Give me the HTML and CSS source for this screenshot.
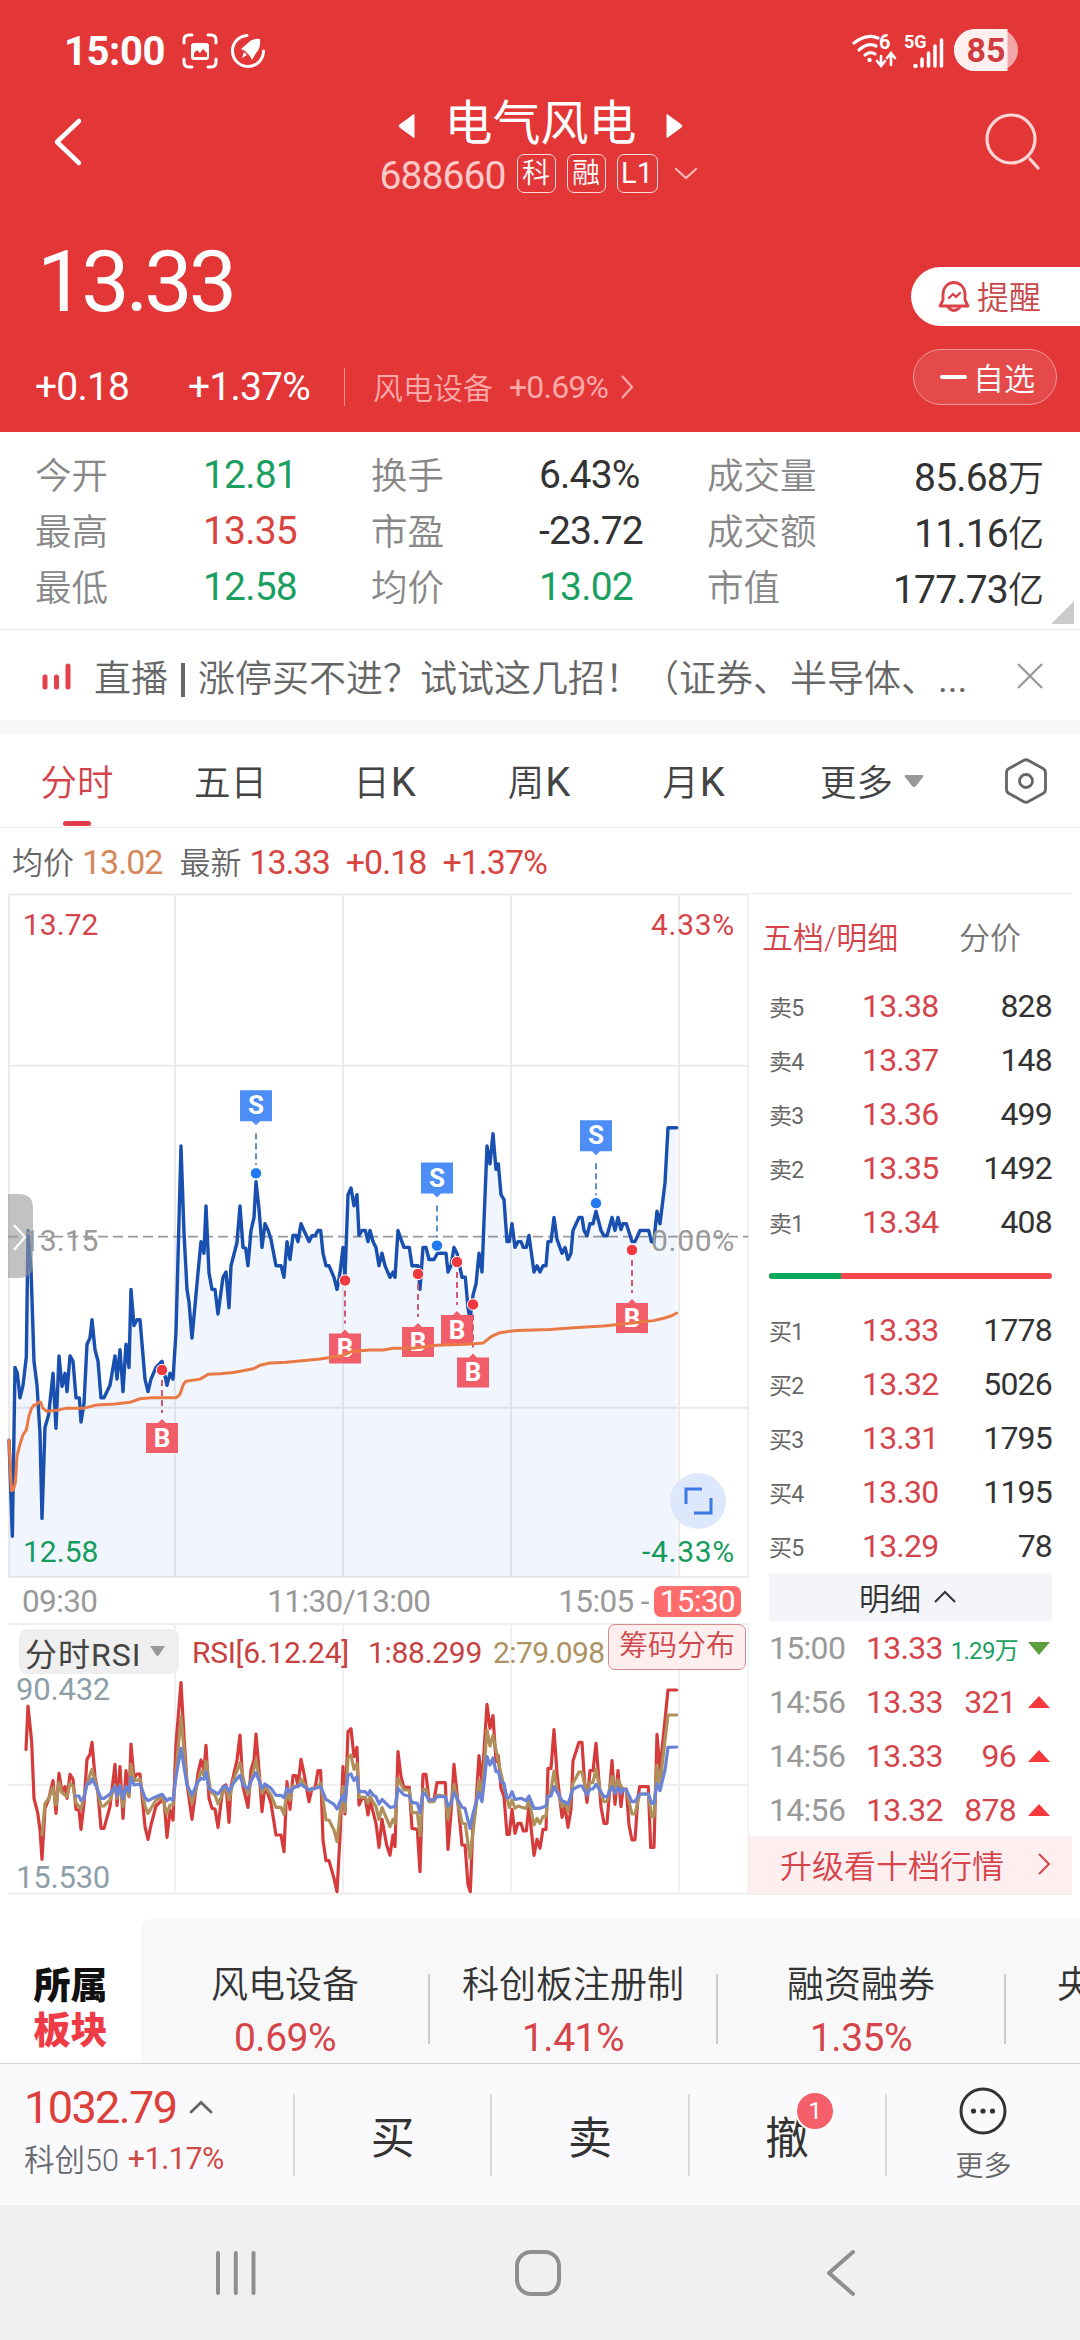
FILE: index.html
```
<!DOCTYPE html>
<html lang="zh-CN">
<head>
    <meta charset="UTF-8">
    <meta name="viewport" content="width=device-width, initial-scale=1.0">
    <title>电气风电 688660</title>
    <link rel="stylesheet" href="styles.css">
</head>
<body>
<div class="page">

    <header class="header">
        <div class="statusBar">
            <span class="clock">15:00</span>
            <svg class="shotIcon" width="36" height="36" viewBox="0 0 36 36">
                <path d="M2 10V7q0-5 5-5h3M26 2h3q5 0 5 5v3M34 26v3q0 5-5 5h-3M10 34H7q-5 0-5-5v-3" fill="none" stroke="#fff" stroke-width="3" stroke-linecap="round"/>
                <rect x="9" y="10" width="18" height="17" rx="3" fill="#fff"/>
                <path d="M12 24v-4l3-3 3 3 3-4 4 4v4z" fill="#e33637"/>
            </svg>
            <svg class="rocketIcon" width="36" height="36" viewBox="0 0 36 36">
                <path d="M17 2.500A15.500 15.500 0 1 0 33.500 18" fill="none" stroke="#fff" stroke-width="3" stroke-linecap="round"/>
                <path d="M30 6q-8-1-12 4l-7 6 4 2 5 5 2 4 4-7q5-5 4-14z" fill="#fff"/>
                <path d="M14 19l3 3-5 3z" fill="#fff"/>
            </svg>
            <span class="grow"></span>
            <svg width="170" height="44" viewBox="850 30 170 44">
                <g fill="none" stroke="#fff" stroke-width="3.200" stroke-linecap="round">
                    <path d="M853 44q13-10 24-5"/>
                    <path d="M858 51q9-8 17-4"/>
                    <path d="M864 56q5-4 10-1"/>
                    <path d="M880 57v9M876 62l4 5 4-5M890 66V55M886 59l4-5 4 5" stroke-width="2.600"/>
                    <path d="M921 60v7M927.500 54v13M934 47v20M940.500 41v26" stroke-width="3.500"/>
                </g>
                <circle cx="868.500" cy="61" r="2.200" fill="#fff"/>
                <circle cx="914.500" cy="67" r="2.300" fill="#fff"/>
                <text x="878" y="50" class="wifiSix">6</text>
                <text x="903" y="48.500" class="fiveG">5G</text>
                <rect x="953" y="30" width="64" height="42" rx="21" fill="#f3a6a7"/>
                <path d="M974 30h32.500v42H974a21 21 0 0 1 0-42z" fill="#fff0f0"/>
                <text x="985" y="62.500" class="battery">85</text>
            </svg>
        </div>

        <div class="titleBar">
            <svg class="backIcon" width="32" height="50" viewBox="0 0 32 50"><path d="M28 4L6 25l22 21" fill="none" stroke="#fff" stroke-width="4.500" stroke-linecap="round" stroke-linejoin="round"/></svg>
            <div class="titleBox">
                <div class="stockName">
                    <svg width="18" height="26" viewBox="0 0 18 26"><path d="M16 1.500v23L1.500 14q-1-1 0-2z" fill="#fff" stroke="#fff" stroke-linejoin="round"/></svg>
                    <span>电气风电</span>
                    <svg width="18" height="26" viewBox="0 0 18 26"><path d="M2 1.500v23L16.500 14q1-1 0-2z" fill="#fff" stroke="#fff" stroke-linejoin="round"/></svg>
                </div>
                <div class="stockCode">
                    <span class="codeNum">688660</span>
                    <span class="tag">科</span>
                    <span class="tag">融</span>
                    <span class="tag tagL1">L1</span>
                    <svg class="codeArrow" width="24" height="14" viewBox="0 0 24 14"><path d="M2 2l10 9 10-9" fill="none" stroke="#ffb9b9" stroke-width="2.200" stroke-linecap="round"/></svg>
                </div>
            </div>
            <svg class="searchIcon" width="58" height="60" viewBox="0 0 58 60"><g fill="none" stroke="#ffd6d6" stroke-width="3.200" stroke-linecap="round"><circle cx="27" cy="27" r="24"/><path d="M46 47l8 9"/></g></svg>
        </div>

        <div class="priceArea">
            <div class="priceLeft">
                <div class="bigPrice">13.33</div>
                <div class="priceSub">
                    <span class="num">+0.18</span>
                    <span class="num">+1.37%</span>
                    <div class="industry">
                        <span>风电设备</span>
                        <span class="industryNum">+0.69%</span>
                        <svg width="14" height="26" viewBox="0 0 14 26"><path d="M2 2l10 11L2 24" fill="none" stroke="#ffa9a9" stroke-width="2.200"/></svg>
                    </div>
                </div>
            </div>
            <div class="priceRight">
                <div class="remindBtn">
                    <svg width="32" height="34" viewBox="0 0 32 34"><g fill="none" stroke="#d94348" stroke-width="2.800" stroke-linejoin="round" stroke-linecap="round"><path d="M5 20v-6a11 11.500 0 0 1 22 0v6l3 6H2z"/><path d="M10 27q6 7 12 0" /><path d="M11 18l4-4 3 3 4-4" stroke-width="2.400"/></g></svg>
                    <span>提醒</span>
                </div>
                <div class="favBtn"><i class="minus"></i><span>自选</span></div>
            </div>
        </div>
    </header>

    <section class="stats">
        <span class="label">今开</span><span class="num green">12.81</span>
        <span class="label">换手</span><span class="num">6.43%</span>
        <span class="label">成交量</span><span class="num right">85.68<small>万</small></span>
        <span class="label">最高</span><span class="num red">13.35</span>
        <span class="label">市盈</span><span class="num">-23.72</span>
        <span class="label">成交额</span><span class="num right">11.16<small>亿</small></span>
        <span class="label">最低</span><span class="num green">12.58</span>
        <span class="label">均价</span><span class="num green">13.02</span>
        <span class="label">市值</span><span class="num right">177.73<small>亿</small></span>
        <i class="corner"></i>
    </section>

    <section class="notice">
        <svg width="30" height="28" viewBox="0 0 30 28"><path d="M3 15v10M14.500 15v10M26 4v21" stroke="#e5414c" stroke-width="5" stroke-linecap="round"/></svg>
        <span class="noticeText">直播<i class="bar"></i>涨停买不进？试试这几招！（证券、半导体、<b>...</b></span>
        <svg width="26" height="26" viewBox="0 0 26 26"><path d="M1 1l24 24M25 1L1 25" stroke="#999" stroke-width="2.400"/></svg>
    </section>

    <nav class="tabs">
        <span class="active">分时</span>
        <span>五日</span>
        <span>日<b>K</b></span>
        <span>周<b>K</b></span>
        <span>月<b>K</b></span>
        <span class="moreTab">更多<svg width="20" height="14" viewBox="0 0 20 14"><path d="M1 1h18q1 1 0 2l-7 9q-2 2-4 0L1 3q-1-1 0-2z" fill="#999"/></svg></span>
        <svg class="setIcon" width="44" height="46" viewBox="0 0 44 46"><g fill="none" stroke="#666" stroke-width="2.800"><path d="M19.500 2.500q2.500-1.500 5 0L39 10.500q2.500 1.500 2.500 4v17q0 2.500-2.500 4L24.500 43.500q-2.500 1.500-5 0L5 35.500q-2.500-1.500-2.500-4v-17q0-2.500 2.500-4z"/><circle cx="22" cy="23" r="6.500"/></g></svg>
    </nav>

    <div class="infoLine">
        <span class="infoLabel">均价</span><span class="num orange">13.02</span>
        <span class="infoLabel second">最新</span><span class="num red">13.33</span><span class="num red gap">+0.18</span><span class="num red gap">+1.37%</span>
    </div>

    <main class="main">
        <div class="charts">
            <!-- 分时图 -->
            <svg class="minuteChart" width="749" height="686" viewBox="0 893 749 686">
                <defs>
                    <g id="sell">
                        <path d="M-16-83h32v31H4l-4 4-4-4h-12z" fill="#4d8df6"/>
                        <text y="-59" class="mark">S</text>
                        <path d="M0-40V-8" stroke="#5b8fc9" stroke-width="2" stroke-dasharray="6 4"/>
                        <circle r="5.700" fill="#2478f0" stroke="#fff" stroke-width="1"/>
                    </g>
                    <g id="buy">
                        <path d="M-16 53h12l4-4 4 4h12v30h-32z" fill="#f15e69"/>
                        <text y="76.500" class="mark">B</text>
                        <path d="M0 10v33" stroke="#d25a6c" stroke-width="2" stroke-dasharray="6 4"/>
                        <circle r="5.700" fill="#f0383f" stroke="#fff" stroke-width="1"/>
                    </g>
                </defs>
                <g fill="none" stroke="#ebebed" stroke-width="2">
                    <path d="M9 894.500h739.500V1577H9z"/>
                    <path d="M175 894v683M343 894v683M511 894v683M679 894v683M9 1065.700h739M9 1407.700h739"/>
                </g>
                <path d="M8 1236.700h740" stroke="#999" stroke-width="1.800" stroke-dasharray="10 5"/>
                <g transform="translate(0 880) scale(.33333 .44643)">
                    <path class="area" d="M27 1255L37 1470L45 1092L60 1160L79 1068L84 785L102 1078L120 1240L126 1430L135 1226L159 1105L168 1228L177 1066L186 1134L201 1146L210 1066L228 1160L243 1214L261 1040L276 985L303 1160L330 1132L345 1066L369 1146L378 1040L393 917L402 998L420 985L444 1146L486 1078L501 1132L519 1118L528 1012L543 596L561 917L576 1026L603 810L618 730L627 880L654 972L678 878L687 958L693 864L720 730L744 864L768 676L786 823L795 770L828 864L852 890L861 810L903 770L927 810L962 785L969 836L1011 917L1029 823L1035 890L1044 705L1071 705L1077 796L1110 785L1137 864L1170 890L1185 890L1194 785L1228 823L1254 864L1269 823L1344 878L1362 823L1396 890L1410 985L1437 836L1446 878L1461 596L1479 568L1512 716L1521 810L1587 796L1602 878L1638 864L1644 810L1662 756L1704 850L1719 785L1746 756L1788 742L1821 797L1836 756L1879 770L1896 810L1920 785L1961 812L1971 742L1980 770L1995 678L2004 555H2030V1560H27z"/>
                    <polyline class="line price" points="27,1255 37,1470 45,1092 52,1104 60,1160 69,1132 79,1068 84,785 93,870 102,1078 111,1132 120,1240 126,1430 135,1226 146,1198 159,1105 168,1228 177,1066 186,1134 195,1105 201,1146 210,1066 219,1078 228,1160 238,1160 243,1214 252,1172 261,1040 270,1026 276,985 285,1052 294,1078 303,1160 312,1160 330,1132 345,1066 351,1118 360,1052 369,1146 378,1040 387,1092 393,917 402,998 411,985 420,985 435,1118 444,1146 453,1118 468,1092 486,1078 501,1132 510,1105 519,1118 528,1012 543,596 552,790 561,917 567,945 576,1026 594,880 603,810 612,836 618,730 627,880 636,917 645,917 654,972 669,890 678,878 687,958 693,864 711,812 720,730 729,823 737,825 744,864 753,785 762,756 768,676 777,736 786,823 795,770 804,784 813,805 828,864 843,864 852,890 861,810 870,850 879,796 888,796 894,810 903,770 912,785 927,810 936,797 945,797 954,785 962,785 969,836 978,864 987,864 1002,890 1011,917 1020,880 1029,823 1035,890 1044,705 1053,690 1062,730 1071,705 1077,796 1086,785 1096,785 1104,810 1110,785 1119,810 1128,823 1137,864 1146,836 1155,864 1170,890 1179,878 1185,890 1194,785 1203,805 1212,823 1228,823 1236,864 1254,864 1260,917 1269,823 1278,823 1287,850 1302,850 1313,836 1338,836 1344,878 1353,864 1362,823 1371,836 1386,890 1396,890 1404,958 1410,985 1419,930 1428,905 1437,836 1446,878 1461,596 1470,636 1479,568 1488,648 1495,636 1503,705 1512,716 1521,810 1528,810 1536,770 1545,823 1554,810 1563,810 1570,823 1579,823 1587,796 1602,878 1611,864 1620,878 1629,864 1638,864 1644,810 1653,810 1662,756 1671,805 1686,836 1695,823 1704,850 1713,836 1719,785 1737,756 1746,756 1752,785 1761,797 1770,770 1779,770 1788,742 1803,785 1812,797 1821,797 1836,756 1845,785 1854,756 1863,783 1869,770 1879,770 1896,810 1905,810 1920,785 1946,785 1954,810 1961,812 1971,742 1980,770 1995,678 2004,555 2030,555"/>
                </g>
                <use href="#sell" x="256" y="1173.300"/>
                <use href="#sell" x="437" y="1245.600"/>
                <use href="#sell" x="596" y="1203.200"/>
                <use href="#buy" x="162" y="1370"/>
                <use href="#buy" x="345" y="1280.500"/>
                <use href="#buy" x="418" y="1274"/>
                <use href="#buy" x="457" y="1262"/>
                <use href="#buy" x="473" y="1304.500"/>
                <use href="#buy" x="632" y="1250"/>
                <g transform="translate(0 880) scale(.33333 .44643)">
                    <polyline class="line average" points="27,1255 34,1368 40,1366 46,1350 51,1290 60,1264 69,1243 79,1232 87,1200 95,1183 102,1176 108,1176 114,1170 122,1170 128,1183 140,1190 170,1188 200,1183 252,1183 290,1176 345,1174 390,1170 420,1162 455,1160 528,1160 540,1152 550,1130 558,1123 600,1118 625,1107 660,1106 700,1103 760,1095 780,1087 810,1082 860,1080 960,1073 1030,1065 1055,1056 1110,1053 1150,1053 1180,1049 1240,1049 1310,1042 1400,1040 1450,1037 1475,1022 1500,1014 1550,1009 1650,1007 1720,1003 1810,999 1890,993 1960,987 1985,983 2015,976 2030,970"/>
                </g>
                <g class="axisText">
                    <text x="23" y="935" fill="#d6444b">13.72</text>
                    <text x="735" y="935" fill="#d6444b" class="end">4.33%</text>
                    <text x="23" y="1250.500" fill="#999">13.15</text>
                    <text x="735" y="1250.500" fill="#999" class="end">0.00%</text>
                    <text x="23" y="1562" fill="#149c5c">12.58</text>
                    <text x="735" y="1562" fill="#149c5c" class="end">-4.33%</text>
                </g>
                <path d="M8 1194h11q14 0 14 14v56q0 14-14 14H8z" fill="#999" opacity=".6"/>
                <path d="M14 1225l11 12-11 13" fill="none" stroke="#fff" stroke-width="2.200"/>
                <circle cx="698" cy="1501" r="28" fill="#dde8fd"/>
                <path d="M686 1504v-15h16M711 1498v15h-17" fill="none" stroke="#3b7ae6" stroke-width="3"/>
            </svg>

            <div class="timeAxis">
                <span>09:30</span>
                <span class="mid">11:30/13:00</span>
                <span class="last">15:05 -<b>15:30</b></span>
            </div>

            <!-- RSI 副图 -->
            <div class="rsi">
                <svg width="749" height="272" viewBox="0 1623 749 272">
                    <path d="M8 1624h741M8 1785h741M8 1893.500h741M175 1624v269M343 1624v269M511 1624v269M679 1624v269M748.500 1624v269" stroke="#efeff0" stroke-width="1.800"/>
                    <g transform="translate(0 1570) scale(.33333)">
                        <polyline class="line rsi6" points="78,538 84,408 95,515 102,685 113,728 120,780 126,868 135,715 146,688 159,632 168,730 177,610 186,665 195,650 201,685 210,613 219,628 228,718 237,720 243,778 252,700 261,568 270,553 276,517 285,620 294,670 303,775 312,775 330,710 345,583 351,706 360,590 369,745 378,602 387,680 393,522 402,625 411,612 420,612 435,770 444,808 453,765 468,708 486,690 492,688 501,802 510,720 519,750 528,520 543,338 552,500 561,640 576,748 594,610 603,570 612,602 618,526 627,685 636,715 645,717 654,772 669,650 678,645 687,757 693,650 711,570 720,495 729,650 744,712 753,600 762,570 768,492 777,600 786,725 795,645 813,700 828,795 843,795 852,845 861,635 870,718 879,617 888,617 894,650 903,568 912,610 927,695 936,655 945,655 954,602 962,602 969,810 978,872 987,872 1002,925 1011,965 1020,800 1029,590 1035,732 1044,485 1053,476 1062,560 1071,532 1077,705 1086,685 1096,685 1104,735 1110,690 1128,760 1137,832 1146,748 1160,825 1170,856 1179,795 1185,830 1194,545 1203,620 1212,652 1228,652 1236,775 1252,778 1260,905 1269,613 1278,613 1287,690 1302,690 1311,638 1336,638 1344,838 1353,730 1362,583 1371,670 1380,760 1386,825 1395,825 1404,945 1411,965 1419,760 1428,700 1437,557 1446,640 1461,403 1470,475 1479,437 1488,575 1495,557 1503,655 1512,680 1521,793 1528,793 1536,718 1545,790 1554,760 1563,760 1570,783 1579,783 1587,705 1595,790 1602,856 1611,808 1620,835 1629,778 1638,778 1644,595 1653,595 1662,479 1671,610 1686,742 1695,710 1704,772 1713,718 1719,573 1737,517 1746,517 1754,640 1761,697 1770,602 1779,602 1788,520 1803,710 1812,760 1821,760 1836,572 1845,703 1854,602 1863,710 1869,657 1879,657 1887,765 1896,810 1905,810 1914,680 1919,650 1945,650 1952,832 1962,832 1971,493 1980,600 2004,360 2030,360"/>
                        <polyline class="line rsi12" points="126,795 135,700 146,685 159,652 168,705 177,638 186,668 201,680 210,640 219,648 228,698 243,717 261,640 276,598 290,650 303,708 312,708 330,690 345,645 351,685 360,645 369,710 378,650 387,678 393,583 402,633 420,628 435,708 444,730 468,690 486,680 501,732 510,705 519,705 543,440 561,640 576,698 603,603 612,617 618,573 632,665 645,675 654,702 678,650 687,690 700,632 720,578 735,650 744,672 768,570 786,670 795,650 813,675 828,712 843,712 852,733 861,660 870,690 879,648 894,650 903,627 927,662 945,655 962,640 978,750 987,750 1002,780 1011,815 1029,650 1035,725 1044,565 1053,555 1062,598 1071,580 1077,682 1096,682 1104,700 1110,680 1128,710 1137,748 1146,713 1170,770 1179,748 1185,760 1194,625 1212,660 1228,660 1236,728 1252,728 1260,797 1269,658 1278,658 1287,695 1302,695 1311,675 1336,678 1344,748 1362,643 1386,758 1396,762 1410,865 1437,630 1446,680 1461,480 1470,528 1479,496 1495,575 1512,650 1528,712 1536,690 1545,715 1554,708 1570,713 1579,715 1587,690 1602,765 1611,745 1620,760 1629,740 1638,740 1644,678 1650,678 1662,603 1671,655 1686,710 1695,695 1704,725 1719,640 1737,606 1746,606 1761,675 1770,637 1779,637 1788,598 1803,675 1812,695 1821,695 1836,620 1845,665 1854,630 1869,660 1879,660 1896,732 1905,732 1919,672 1945,672 1955,740 1962,740 1971,585 1980,640 2004,435 2030,435"/>
                        <polyline class="line rsi24" points="228,678 237,678 243,692 252,685 261,642 270,640 276,627 290,652 303,685 312,685 330,672 345,650 351,678 360,648 369,685 378,650 387,665 393,622 402,645 420,642 435,683 444,692 468,680 486,673 501,692 510,685 519,690 528,620 543,535 561,645 576,675 594,635 603,625 612,628 618,606 627,655 654,672 669,652 678,648 687,665 700,640 720,616 729,645 744,657 753,632 768,608 786,655 795,642 813,655 828,676 843,676 852,683 861,655 870,667 879,655 903,643 927,660 945,655 962,650 978,688 1002,703 1011,717 1029,675 1035,695 1044,615 1053,612 1062,632 1071,620 1077,665 1096,665 1104,675 1110,662 1119,675 1128,680 1137,702 1146,688 1170,712 1185,710 1194,655 1212,675 1228,678 1236,697 1252,700 1260,728 1269,668 1278,675 1287,690 1302,690 1311,680 1336,680 1344,708 1353,700 1362,668 1386,712 1395,715 1410,775 1419,730 1437,668 1446,695 1461,560 1470,585 1479,564 1488,605 1495,605 1503,635 1512,640 1520,683 1528,683 1536,665 1545,688 1563,685 1579,692 1587,678 1602,715 1620,715 1638,708 1644,678 1653,678 1662,650 1686,692 1704,702 1719,658 1737,648 1746,648 1761,675 1770,657 1779,657 1788,643 1812,680 1821,680 1836,650 1845,670 1854,652 1863,670 1869,657 1879,660 1896,695 1905,695 1919,672 1945,672 1955,700 1962,700 1971,640 1980,662 1995,600 2004,532 2030,531"/>
                    </g>
                    <g class="rsiText">
                        <text x="16" y="1700" fill="#8d9fa9">90.432</text>
                        <text x="16" y="1888" fill="#8d9fa9">15.530</text>
                    </g>
                </svg>
                <div class="rsiHead">
                    <span class="rsiSelect">分时RSI<svg width="15" height="11" viewBox="0 0 15 11"><path d="M0 0h15L9 9q-1.500 2-3 0z" fill="#999"/></svg></span>
                    <span class="rsiName">RSI[6.12.24]</span>
                    <span class="rsiOne">1:88.299</span>
                    <span class="rsiTwo">2:79.098</span>
                    <span class="chipBtn">筹码分布</span>
                </div>
            </div>
        </div>

        <aside class="book">
            <div class="bookTabs"><span class="on">五档/明细</span><span>分价</span></div>
            <div class="row"><span>卖5</span><b>13.38</b><em>828</em></div>
            <div class="row"><span>卖4</span><b>13.37</b><em>148</em></div>
            <div class="row"><span>卖3</span><b>13.36</b><em>499</em></div>
            <div class="row"><span>卖2</span><b>13.35</b><em>1492</em></div>
            <div class="row"><span>卖1</span><b>13.34</b><em>408</em></div>
            <div class="ratio"><i></i></div>
            <div class="row"><span>买1</span><b>13.33</b><em>1778</em></div>
            <div class="row"><span>买2</span><b>13.32</b><em>5026</em></div>
            <div class="row"><span>买3</span><b>13.31</b><em>1795</em></div>
            <div class="row"><span>买4</span><b>13.30</b><em>1195</em></div>
            <div class="row"><span>买5</span><b>13.29</b><em>78</em></div>
            <div class="detailBar">明细<svg width="22" height="13" viewBox="0 0 22 13"><path d="M1 12L11 2l10 10" fill="none" stroke="#333" stroke-width="2"/></svg></div>
            <div class="tick"><span>15:00</span><b>13.33</b><em class="sold">1.29万</em><i class="down"></i></div>
            <div class="tick"><span>14:56</span><b>13.33</b><em>321</em><i class="up"></i></div>
            <div class="tick"><span>14:56</span><b>13.33</b><em>96</em><i class="up"></i></div>
            <div class="tick"><span>14:56</span><b>13.32</b><em>878</em><i class="up"></i></div>
            <div class="upgrade">升级看十档行情<svg width="14" height="24" viewBox="0 0 14 24"><path d="M2 2l10 10L2 22" fill="none" stroke="#d6444b" stroke-width="2"/></svg></div>
        </aside>
    </main>

    <section class="sectors">
        <div class="sectorTitle"><span>所属</span><span class="redTitle">板块</span></div>
        <div class="sectorList">
            <div class="sector"><span>风电设备</span><b>0.69%</b></div>
            <div class="sector"><span>科创板注册制</span><b>1.41%</b></div>
            <div class="sector"><span>融资融券</span><b>1.35%</b></div>
            <div class="sector cut"><span>央</span></div>
        </div>
    </section>

    <footer class="tradeBar">
        <div class="indexBox">
            <div class="indexTop"><span>1032.79</span><svg width="24" height="14" viewBox="0 0 24 14"><path d="M2 12L12 2.500 22 12" fill="none" stroke="#666" stroke-width="2.800" stroke-linecap="round"/></svg></div>
            <div class="indexSub"><span>科创50</span><b>+1.17%</b></div>
        </div>
        <div class="trade">买</div>
        <div class="trade">卖</div>
        <div class="trade"><span class="cancel">撤<i class="badge">1</i></span></div>
        <div class="moreBox">
            <svg width="48" height="50" viewBox="0 0 48 50"><circle cx="24" cy="25" r="22" fill="none" stroke="#333" stroke-width="3"/><circle cx="14.500" cy="25" r="2.600" fill="#333"/><circle cx="24" cy="25" r="2.600" fill="#333"/><circle cx="33.500" cy="25" r="2.600" fill="#333"/></svg>
            <span>更多</span>
        </div>
    </footer>

    <div class="navBar">
        <svg width="44" height="48" viewBox="0 0 44 48"><path d="M4 4v40M21.800 4v40M39.500 4v40" stroke="#8e8e8e" stroke-width="4" stroke-linecap="round"/></svg>
        <svg class="home" width="48" height="48" viewBox="0 0 48 48"><rect x="3" y="3" width="42" height="42" rx="14" fill="none" stroke="#8e8e8e" stroke-width="4"/></svg>
        <svg width="32" height="48" viewBox="0 0 32 48"><path d="M28 3L4 24l24 21" fill="none" stroke="#8e8e8e" stroke-width="4" stroke-linecap="round" stroke-linejoin="round"/></svg>
    </div>

</div>
</body>
</html>
```

FILE: styles.css
```
* {
    box-sizing: border-box;
}
body {
    margin: 0;
    background: #fff;
    color: #333;
    font-family: Roboto, "Noto Sans CJK SC", sans-serif;
    font-weight: 350;
}
.page {
    width: 1080px;
    height: 2340px;
    overflow: hidden;
    display: flex;
    flex-direction: column;
}
.page > * {
    flex-shrink: 0;
}
svg {
    display: block;
    flex-shrink: 0;
}
b, em, i {
    font-style: normal;
    font-weight: 450;
}
.grow {
    flex: 1;
}
.num {
    font-size: 39px;
    font-weight: 450;
    letter-spacing: -0.8px;
    white-space: nowrap;
}
.num small {
    font-size: 36px;
    font-weight: 350;
    letter-spacing: 0;
}
.red {
    color: #d9443f;
}
.green {
    color: #1a9f60;
}
.orange {
    color: #d5875a;
}

/* 顶部 */
.header {
    height: 432px;
    background: #e33637;
    color: #fff;
}
.statusBar {
    height: 92px;
    padding: 10px 59px 0 64px;
    display: flex;
    align-items: center;
}
.clock {
    width: 118px;
    font-size: 40px;
    font-weight: 700;
    letter-spacing: -0.4px;
}
.rocketIcon {
    margin-left: 12px;
}
.wifiSix {
    fill: #fff;
    font-size: 20px;
    font-weight: 700;
}
.fiveG {
    fill: #fff;
    font-size: 18px;
    font-weight: 700;
}
.battery {
    fill: #d03c40;
    font-size: 34px;
    font-weight: 700;
    text-anchor: middle;
}
.titleBar {
    height: 108px;
    padding: 0 38px 0 51px;
    display: flex;
    justify-content: space-between;
    align-items: flex-start;
}
.backIcon {
    margin-top: 25px;
}
.titleBox {
    margin-left: 10px;
}
.searchIcon {
    margin-top: 20px;
}
.stockName {
    height: 54px;
    padding-left: 4px;
    display: flex;
    align-items: center;
    justify-content: center;
    gap: 28px;
    font-size: 48px;
    font-weight: 400;
}
.stockName svg {
    margin-top: 14px;
}
.stockCode {
    height: 55px;
    display: flex;
    align-items: center;
    gap: 11px;
    color: #fff;
}
.codeNum {
    margin-top: 4px;
    font-size: 39px;
    letter-spacing: -0.9px;
    font-weight: 400;
    color: #ffc8c8;
}
.tag {
    width: 39px;
    height: 39px;
    border: 1.5px solid #ffdada;
    border-radius: 7px;
    font-size: 28px;
    line-height: 37px;
    text-align: center;
}
.tagL1 {
    width: 41px;
    font-weight: 450;
    font-size: 29px;
    line-height: 36px;
}
.codeArrow {
    margin-left: 5px;
}
.priceArea {
    height: 232px;
    display: flex;
    justify-content: space-between;
}
.bigPrice {
    height: 164px;
    padding-left: 37px;
    font-size: 86px;
    line-height: 164px;
    font-weight: 450;
    letter-spacing: -4px;
}
.priceSub {
    height: 44px;
    padding-left: 35px;
    display: grid;
    grid-template-columns: 153px 156px auto;
    align-items: center;
}
.industry {
    height: 38px;
    padding-left: 28px;
    border-left: 1.5px solid #f08a8a;
    display: flex;
    align-items: center;
    font-size: 30px;
    color: #ffa9a9;
}
.industry span:first-child {
    margin-top: -2px;
}
.industryNum {
    margin: 0 12px 0 16px;
    font-size: 32px;
    font-weight: 400;
    letter-spacing: -0.8px;
}
.priceRight {
    padding-top: 67px;
    display: flex;
    flex-direction: column;
    align-items: flex-end;
    gap: 23px;
}
.remindBtn {
    width: 169px;
    height: 59px;
    padding-left: 27px;
    border-radius: 30px 0 0 30px;
    background: #fff;
    color: #c9464a;
    display: flex;
    align-items: center;
    gap: 7px;
    font-size: 32px;
}
.remindBtn span {
    margin-top: -3px;
}
.favBtn {
    width: 144px;
    height: 56px;
    margin-right: 23px;
    padding-left: 26px;
    border: 1.5px solid #f29a9a;
    border-radius: 28px;
    background: #e54a4b;
    display: flex;
    align-items: center;
    gap: 6px;
    font-size: 31px;
}
.favBtn span {
    margin-top: -2px;
}
.minus {
    width: 27px;
    height: 3.5px;
    border-radius: 2px;
    background: #fff;
}

/* 行情数据 */
.stats {
    position: relative;
    height: 198px;
    padding: 15px 36px 0 35px;
    border-bottom: 1.5px solid #ebebeb;
    display: grid;
    grid-template-columns: 168px 168px 168px 168px 124px 1fr;
    grid-auto-rows: 56px;
    align-items: center;
}
.label {
    padding-bottom: 3px;
    font-size: 36.500px;
    color: #888;
}
.right {
    text-align: right;
}
.corner {
    position: absolute;
    right: 6px;
    bottom: 5px;
    border-left: 23px solid transparent;
    border-bottom: 23px solid #ccc;
}
.notice {
    height: 90px;
    padding: 2px 37px 0 42px;
    display: flex;
    align-items: center;
    color: #666;
    font-size: 37px;
}
.noticeText {
    flex: 1;
    margin-left: 22px;
    white-space: nowrap;
}
.notice .bar {
    display: inline-block;
    width: 4px;
    height: 34px;
    margin: 0 13px;
    background: #666;
    vertical-align: -5px;
}

/* 周期切换 */
.tabs {
    position: relative;
    height: 108px;
    padding: 0 32px 0 0;
    border-top: 14px solid #f7f7f7;
    border-bottom: 1.5px solid #ebebeb;
    display: grid;
    grid-template-columns: 154px 153px 155px 154px 155px 1fr auto;
    align-items: center;
    justify-items: center;
    font-size: 36.500px;
    color: #444;
}
.tabs b {
    font-size: 40px;
    margin-left: 1px;
}
.active {
    position: relative;
    color: #d6444b;
}
.active::after {
    content: "";
    position: absolute;
    left: 50%;
    bottom: -19px;
    width: 28px;
    height: 5px;
    margin-left: -14px;
    border-radius: 3px;
    background: #e23d49;
}
.moreTab {
    margin-right: 31px;
    display: flex;
    align-items: center;
    gap: 11px;
}
.infoLine {
    height: 65px;
    padding: 3px 0 0 12px;
    display: flex;
    align-items: center;
}
.infoLabel {
    margin: -3px 8px 0 0;
    font-size: 31px;
    color: #666;
}
.infoLine .num {
    font-size: 34px;
    letter-spacing: -1px;
}
.infoLine .second {
    margin-left: 17px;
}
.gap {
    margin-left: 16px;
}

/* 图表 */
.main {
    display: flex;
    height: 1002px;
}
.charts {
    width: 749px;
}
.line {
    fill: none;
    stroke-linejoin: round;
    stroke-linecap: round;
    vector-effect: non-scaling-stroke;
}
.area {
    fill: #3d7ff5;
    fill-opacity: .075;
}
.price {
    stroke: #194fae;
    stroke-width: 3.4px;
}
.average {
    stroke: #e97a45;
    stroke-width: 3px;
}
.rsi6 {
    stroke: #d63b3b;
    stroke-width: 3.2px;
}
.rsi12 {
    stroke: #b0905a;
    stroke-width: 3.2px;
}
.rsi24 {
    stroke: #6b83d6;
    stroke-width: 3.2px;
}
.mark {
    fill: #fff;
    font-size: 26px;
    font-weight: 700;
    text-anchor: middle;
}
.axisText {
    font-size: 30px;
    font-weight: 450;
}
.end {
    text-anchor: end;
    letter-spacing: 0.7px;
}
.timeAxis {
    height: 44px;
    padding: 1px 8px 0 22px;
    display: flex;
    align-items: center;
    justify-content: space-between;
    font-size: 31.500px;
    font-weight: 400;
    letter-spacing: -0.6px;
    color: #999;
}
.timeAxis .mid {
    margin-left: 42px;
}
.timeAxis b {
    display: inline-block;
    width: 87px;
    height: 31px;
    margin-left: 5px;
    border-radius: 7px;
    background: #fe6c6c;
    color: #fff;
    line-height: 31px;
    text-align: center;
}
.rsi {
    position: relative;
    height: 272px;
}
.rsiHead {
    position: absolute;
    left: 19px;
    right: 2px;
    top: 0;
    height: 52px;
    display: flex;
    align-items: center;
    font-size: 30px;
    font-weight: 450;
    letter-spacing: -0.3px;
    white-space: nowrap;
}
.rsiSelect {
    width: 160px;
    height: 45px;
    margin-top: 5px;
    padding-left: 6px;
    border-radius: 8px;
    background: #efefef;
    color: #444;
    display: flex;
    align-items: center;
    gap: 9px;
    font-size: 32px;
    font-weight: 400;
    letter-spacing: 1px;
}
.rsiName {
    width: 177px;
    padding-left: 13px;
    margin-top: 7px;
    color: #c6413f;
}
.rsiOne {
    width: 124px;
    padding-left: 12px;
    margin-top: 7px;
    color: #c6413f;
}
.rsiTwo {
    width: 128px;
    padding-left: 13px;
    margin-top: 7px;
    color: #ad925f;
    letter-spacing: -0.6px;
}
.chipBtn {
    width: 138px;
    height: 46px;
    margin-top: -4px;
    border: 1.5px solid #d98a8c;
    border-radius: 7px;
    background: #feeeee;
    color: #cf484b;
    font-size: 29px;
    font-weight: 350;
    line-height: 43px;
    text-align: center;
    letter-spacing: 0;
}
.rsiText {
    font-size: 31px;
    font-weight: 400;
    letter-spacing: -0.2px;
}

/* 五档盘口 */
.book {
    width: 323px;
    border-top: 1.5px solid #ebebeb;
    border-bottom: 1.5px solid #ebebeb;
}
.bookTabs {
    height: 85px;
    padding: 0 51px 2px 13px;
    display: flex;
    justify-content: space-between;
    align-items: center;
    font-size: 31px;
    color: #777;
}
.on {
    color: #d6444b;
}
.row {
    height: 54px;
    margin: 0 20px;
    display: grid;
    grid-template-columns: 93px 90px 1fr;
    align-items: center;
    font-size: 32px;
    letter-spacing: -0.8px;
}
.row span {
    font-size: 23px;
    color: #666;
    font-weight: 400;
}
.row b {
    color: #d6444b;
}
.row em {
    text-align: right;
}
.ratio {
    height: 6px;
    margin: 24px 20px;
    border-radius: 3px;
    overflow: hidden;
    background: #f5494b;
}
.ratio i {
    display: block;
    width: 72px;
    height: 6px;
    background: #0aaa5c;
}
.detailBar {
    height: 48px;
    margin: 0 20px;
    padding: 0 6px 2px 0;
    background: #f4f5f9;
    display: flex;
    align-items: center;
    justify-content: center;
    gap: 13px;
    font-size: 31px;
}
.tick {
    height: 54px;
    margin: 0 20px;
    display: grid;
    grid-template-columns: 97px 74px 76px 36px;
    align-items: center;
    font-size: 32px;
    letter-spacing: -0.7px;
}
.tick span {
    font-weight: 400;
    color: #999;
}
.tick b,
.tick em {
    color: #d6444b;
}
.tick em {
    text-align: right;
}
.tick .sold {
    margin-right: -2px;
    font-size: 24px;
    font-weight: 400;
    color: #1a9f60;
}
.up,
.down {
    width: 0;
    margin-left: 12px;
    border: 11px solid transparent;
    border-top: 0;
}
.up {
    border-bottom: 12px solid #f5393c;
}
.down {
    border-bottom: 0;
    border-top: 13px solid #5f9e3d;
}
.upgrade {
    height: 58px;
    margin-top: -1px;
    padding: 0 21px 2px 31px;
    background: #fdeeef;
    color: #d6444b;
    display: flex;
    align-items: center;
    justify-content: space-between;
    font-size: 32px;
}

/* 所属板块 */
.sectors {
    height: 169px;
    padding-top: 24px;
    border-bottom: 1.5px solid #d2d2d4;
    display: flex;
}
.sectorTitle {
    width: 141px;
    padding-top: 45px;
    display: flex;
    flex-direction: column;
    align-items: center;
    font-size: 37px;
    line-height: 45px;
    font-weight: 900;
    color: #111;
}
.redTitle {
    color: #ee3b45;
}
.sectorList {
    width: 939px;
    border-radius: 11px 0 0 0;
    background: #f8f8f8;
    display: flex;
    overflow: hidden;
}
.sector {
    position: relative;
    flex: none;
    width: 288px;
    padding-top: 41px;
    display: flex;
    flex-direction: column;
    align-items: center;
    font-size: 37px;
    line-height: 52px;
}
.sector b {
    font-size: 39px;
    letter-spacing: -0.5px;
    color: #d6444b;
}
.sector + .sector::before {
    content: "";
    position: absolute;
    left: -1px;
    top: 55px;
    width: 1.5px;
    height: 70px;
    background: #ccc;
}
.cut {
    align-items: flex-start;
    padding-left: 52px;
}

/* 底部交易栏 */
.tradeBar {
    height: 141px;
    background: #fafafd;
    display: flex;
    align-items: center;
}
.indexBox {
    width: 293px;
    height: 141px;
    padding: 16px 0 0 24px;
}
.indexTop {
    height: 54px;
    display: flex;
    align-items: center;
    gap: 13px;
    font-size: 45px;
    font-weight: 450;
    letter-spacing: -1.6px;
    color: #db403b;
}
.indexSub {
    height: 48px;
    display: flex;
    align-items: center;
    gap: 9px;
    font-size: 30.500px;
    color: #666a70;
}
.indexSub b {
    letter-spacing: -0.5px;
    color: #cf4a46;
}
.trade {
    width: 197.300px;
    height: 82px;
    border-left: 2px solid #dadadc;
    font-size: 44px;
    font-weight: 400;
    line-height: 90px;
    text-align: center;
}
.cancel {
    position: relative;
}
.badge {
    position: absolute;
    left: 30px;
    top: -22px;
    width: 40px;
    height: 40px;
    border: 2px solid #fff;
    border-radius: 50%;
    background: #f55f6a;
    color: #fff;
    font-size: 24px;
    line-height: 37px;
    text-align: center;
}
.moreBox {
    flex: 1;
    height: 82px;
    border-left: 2px solid #dadadc;
    display: flex;
    flex-direction: column;
    align-items: center;
    font-size: 28px;
    color: #666;
}
.moreBox svg {
    margin: -8px 0 8px;
}
.navBar {
    height: 135px;
    padding: 0 223px 0 214px;
    background: #f0f0f2;
    display: flex;
    align-items: center;
    justify-content: space-between;
}
.home {
    margin-right: 8px;
}
```
